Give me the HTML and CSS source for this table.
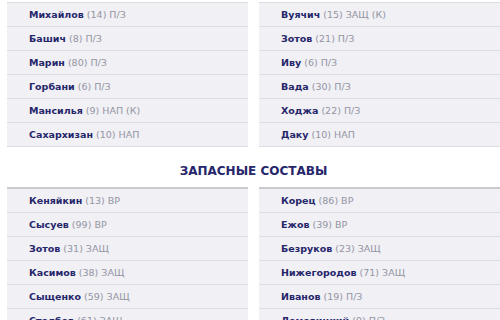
FILE: index.html
```html
<!DOCTYPE html>
<html lang="ru">
<head>
<meta charset="utf-8">
<link rel="stylesheet" href="styles.css">
</head>
<body>
<div class="lineup main">
  <ul class="col">
    <li class="row"><b>Михайлов</b> (14) П/З</li>
    <li class="row"><b>Башич</b> (8) П/З</li>
    <li class="row"><b>Марин</b> (80) П/З</li>
    <li class="row"><b>Горбани</b> (6) П/З</li>
    <li class="row"><b>Мансилья</b> (9) НАП (К)</li>
    <li class="row"><b>Сахархизан</b> (10) НАП</li>
  </ul>
  <ul class="col">
    <li class="row"><b>Вуячич</b> (15) ЗАЩ (К)</li>
    <li class="row"><b>Зотов</b> (21) П/З</li>
    <li class="row"><b>Иву</b> (6) П/З</li>
    <li class="row"><b>Вада</b> (30) П/З</li>
    <li class="row"><b>Ходжа</b> (22) П/З</li>
    <li class="row"><b>Даку</b> (10) НАП</li>
  </ul>
</div>
<h2 class="title">ЗАПАСНЫЕ СОСТАВЫ</h2>
<div class="lineup subs">
  <ul class="col">
    <li class="row"><b>Кеняйкин</b> (13) ВР</li>
    <li class="row"><b>Сысуев</b> (99) ВР</li>
    <li class="row"><b>Зотов</b> (31) ЗАЩ</li>
    <li class="row"><b>Касимов</b> (38) ЗАЩ</li>
    <li class="row"><b>Сыщенко</b> (59) ЗАЩ</li>
    <li class="row"><b>Столбов</b> (61) ЗАЩ</li>
  </ul>
  <ul class="col">
    <li class="row"><b>Корец</b> (86) ВР</li>
    <li class="row"><b>Ежов</b> (39) ВР</li>
    <li class="row"><b>Безруков</b> (23) ЗАЩ</li>
    <li class="row"><b>Нижегородов</b> (71) ЗАЩ</li>
    <li class="row"><b>Иванов</b> (19) П/З</li>
    <li class="row"><b>Ломовицкий</b> (9) П/З</li>
  </ul>
</div>
</body>
</html>
```

FILE: styles.css
```css
html, body {
  margin: 0;
  padding: 0;
  background: #ffffff;
  overflow: hidden;
}
body {
  font-family: "DejaVu Sans", "Liberation Sans", sans-serif;
  font-size: 9.5px;
  color: #9494a2;
}
.lineup {
  display: grid;
  grid-template-columns: 241px 241px;
  column-gap: 11px;
  padding-left: 7px;
}
.main {
  margin-top: 2px;
}
.col {
  list-style: none;
  margin: 0;
  padding: 0;
  background: #f0f0f5;
}
.main .col {
  border-top: 1px solid #dcdce3;
}
.subs .col {
  border-top: 2px solid #c9c9cf;
}
.row {
  height: 23px;
  border-bottom: 1px solid #dcdce3;
  display: flex;
  align-items: center;
  padding-left: 22px;
  white-space: pre;
}
.row b {
  color: #26266a;
  font-weight: 700;
}
.title {
  margin: 16px 0 8px;
  padding-left: 7px;
  text-align: center;
  font-size: 12px;
  line-height: 16px;
  font-weight: 700;
  color: #26266a;
}
```
